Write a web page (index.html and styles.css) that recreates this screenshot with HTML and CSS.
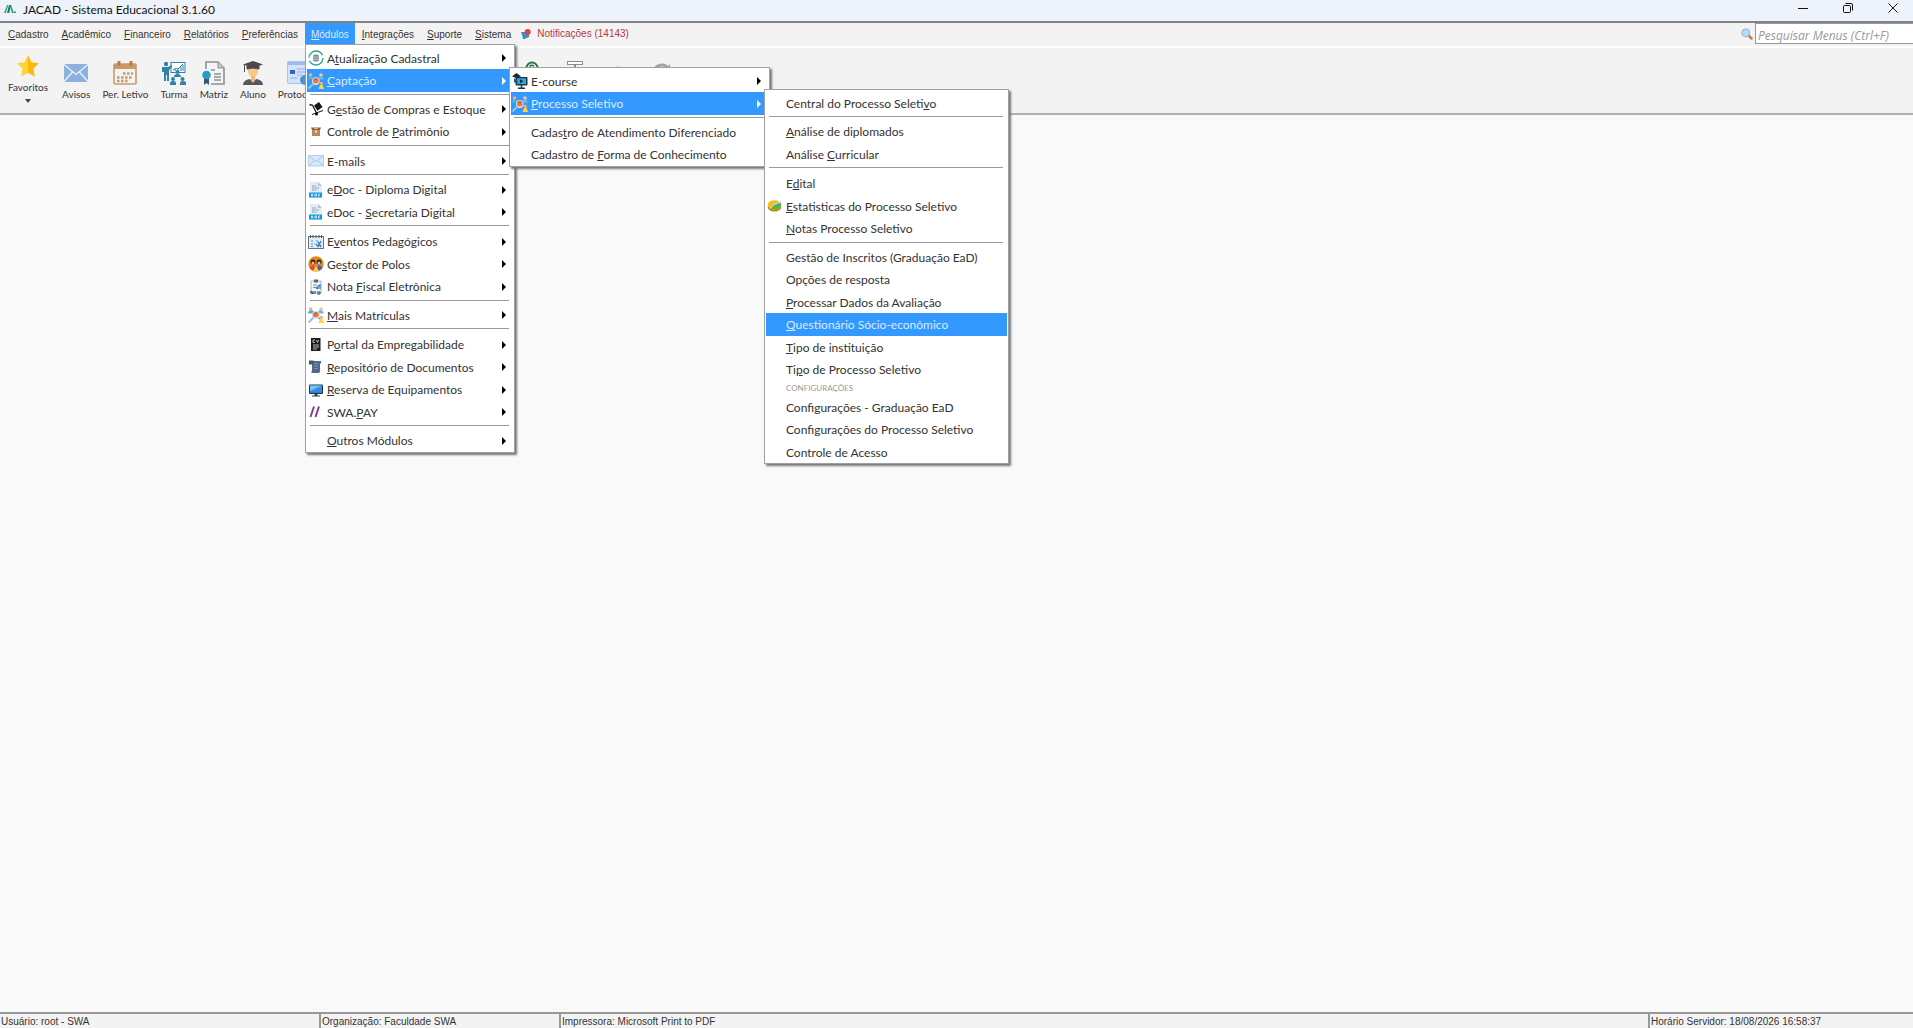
FILE: index.html
```html
<!DOCTYPE html>
<html lang="pt-BR">
<head>
  <meta charset="UTF-8" />
  <meta name="viewport" content="width=device-width, initial-scale=1.0"/>
  <title>JACAD - Sistema Educacional 3.1.60</title>
  <link rel="stylesheet" href="styles.css">
</head>
<body>

  <svg class="sprite" aria-hidden="true">
    <symbol id="people" viewBox="0 0 16 16">
      <path d="M3 3l10 10M13 3L3 13" stroke="#5b8fd0" stroke-width="1.4"/>
      <circle cx="2.6" cy="2" r="1.8" fill="#efb27c"/><path d="M0 6.5q0-3 2.6-3t2.6 3z" fill="#4cb8c4"/>
      <circle cx="13" cy="2" r="1.8" fill="#f3c59a"/><path d="M10.4 6.5q0-3 2.6-3t2.6 3z" fill="#63bfe8"/>
      <circle cx="13.4" cy="10.3" r="1.6" fill="#efb27c"/><path d="M10.6 16l1.4-4h2.6l1.4 4z" fill="#ffd43d"/>
      <path d="M.5 15.5L5 11" stroke="#8ec5ef" stroke-width="2"/>
      <circle cx="7.8" cy="8" r="3.5" fill="#e97742" stroke="#cfe6f7" stroke-width="1"/>
      <path d="M5 9.5q2.8 2 5.6 0l-1 2H6z" fill="#f7e3d3"/><path d="M5.5 6.6q2.3-2.2 4.6 0z" fill="#a8532f"/>
    </symbol>
    <symbol id="doc" viewBox="0 0 16 16">
      <path d="M2 0h8l4 4v12H2z" fill="#e4ebf1"/><path d="M10 0v4h4z" fill="#b4c4d1"/>
      <path d="M4 4h4M4 6h7M4 8h5" stroke="#7a9ed0" stroke-width="1" stroke-dasharray="2 .5"/>
      <rect x="1" y="10.5" width="13" height="5" fill="#139bdc"/>
      <path d="M3.5 12v2h1.2v-2zM7 12h1.5v2H7zM12 12h-1.5v2H12" fill="none" stroke="#fff" stroke-width=".7"/>
    </symbol>
    <symbol id="arrow" viewBox="0 0 4 8"><path d="M0 0l4 4-4 4z" fill="currentColor"/></symbol>
  </svg>

  <header class="titlebar">
    <svg class="logo" viewBox="0 0 12 9"><path d="M0 8L3 0h1.4L1.8 8z" fill="#39a878"/><path d="M3 8l2-8h2.2L5.2 8z" fill="#177a72"/><path d="M7 0l3 8H8L6.2 2zM10 6.5h2V8h-2z" fill="#2fa06f"/></svg>
    <h1>JACAD - Sistema Educacional 3.1.60</h1>
    <div class="window-btns">
      <button aria-label="Minimizar"><svg viewBox="0 0 10 10"><path d="M0 5.5h10"/></svg></button>
      <button aria-label="Restaurar"><svg viewBox="0 0 10 10"><rect x=".5" y="2.5" width="7" height="7" rx="1"/><path d="M2.5.5H8q1.5 0 1.5 1.5v5.5"/></svg></button>
      <button aria-label="Fechar"><svg viewBox="0 0 10 10"><path d="M.5.5l9 9M9.5.5l-9 9"/></svg></button>
    </div>
  </header>

  <nav class="menubar">
    <button><u>C</u>adastro</button>
    <button><u>A</u>cadêmico</button>
    <button><u>F</u>inanceiro</button>
    <button><u>R</u>elatórios</button>
    <button><u>P</u>referências</button>
    <div class="dropdown">
      <button class="active"><u>M</u>ódulos</button>

      <div class="menu menu-modulos">
        <div class="item"><button><svg class="icon" viewBox="0 0 16 16"><circle cx="8" cy="8" r="7" fill="none" stroke="#2fa58c" stroke-width="1.3" stroke-dasharray="19 3"/><rect x="5" y="4.5" width="6" height="7" rx="2" fill="#7c8b94"/><path d="M5 7h6M5 9.2h6" stroke="#dfe6ea" stroke-width=".7"/></svg><span>A<u>t</u>ualização Cadastral</span><svg class="arrow"><use href="#arrow"/></svg></button></div>
        <div class="item">
          <button class="active"><svg class="icon"><use href="#people"/></svg><span><u>C</u>aptação</span><svg class="arrow"><use href="#arrow"/></svg></button>

          <div class="menu menu-captacao">
            <div class="item"><button><svg class="icon" viewBox="0 0 16 16"><rect x="3.5" y="4" width="12" height="8.5" rx="1" fill="#1d3446"/><rect x="5" y="5.3" width="9" height="5.8" fill="#27a9dd"/><path d="M8 6.3l3.4 2L8 10.2z" fill="#12293a"/><path d="M9.5 12v3M6 15.2h7" stroke="#1d3446" stroke-width="1.5"/><path d="M0 3.2L4.5 0 9 3.2 4.5 5.2z" fill="#1b2a38"/><path d="M2 5v4q2.5 2 4 0" fill="#1f5b78"/></svg><span>E-course</span><svg class="arrow"><use href="#arrow"/></svg></button></div>
            <div class="item">
              <button class="active"><svg class="icon"><use href="#people"/></svg><span><u>P</u>rocesso Seletivo</span><svg class="arrow"><use href="#arrow"/></svg></button>

              <div class="menu menu-processo">
                <div class="item"><button><i class="icon"></i><span>Central do Processo Seleti<u>v</u>o</span></button></div>
                <hr>
                <div class="item"><button><i class="icon"></i><span><u>A</u>nálise de diplomados</span></button></div>
                <div class="item"><button><i class="icon"></i><span>Análise <u>C</u>urricular</span></button></div>
                <hr>
                <div class="item"><button><i class="icon"></i><span>E<u>d</u>ital</span></button></div>
                <div class="item"><button><svg class="icon" viewBox="0 0 16 16"><ellipse cx="7.5" cy="9" rx="6.8" ry="4.5" fill="#b98212"/><ellipse cx="7.5" cy="7" rx="6.8" ry="4.8" fill="#f3b92a"/><path d="M3.5 10.5Q7 5 13.5 4.5q2 3.5-2 6-4 2-8 0z" fill="#58b82c"/><path d="M7 9q3-4 6.5-4.5l.5 2z" fill="#3da4d8"/><path d="M3.5 10.5Q7 5 13.5 4.5" fill="none" stroke="#fff6cf" stroke-width=".8"/></svg><span><u>E</u>statisticas do Processo Seletivo</span></button></div>
                <div class="item"><button><i class="icon"></i><span><u>N</u>otas Processo Seletivo</span></button></div>
                <hr>
                <div class="item"><button><i class="icon"></i><span>Gestão de Inscritos (Graduação EaD)</span></button></div>
                <div class="item"><button><i class="icon"></i><span>Opções de resposta</span></button></div>
                <div class="item"><button><i class="icon"></i><span><u>P</u>rocessar Dados da Avaliação</span></button></div>
                <div class="item"><button class="active"><i class="icon"></i><span><u>Q</u>uestionário Sócio-econômico</span></button></div>
                <div class="item"><button><i class="icon"></i><span><u>T</u>ipo de instituição</span></button></div>
                <div class="item"><button><i class="icon"></i><span>Ti<u>p</u>o de Processo Seletivo</span></button></div>
                <h2>CONFIGURAÇÕES</h2>
                <div class="item"><button><i class="icon"></i><span>Configurações - Graduação EaD</span></button></div>
                <div class="item"><button><i class="icon"></i><span>Configurações do Processo Seletivo</span></button></div>
                <div class="item"><button><i class="icon"></i><span>Controle de Acesso</span></button></div>
              </div>
            </div>
            <hr>
            <div class="item"><button><i class="icon"></i><span>Cadas<u>t</u>ro de Atendimento Diferenciado</span></button></div>
            <div class="item"><button><i class="icon"></i><span>Cadastro de <u>F</u>orma de Conhecimento</span></button></div>
          </div>
        </div>
        <hr>
        <div class="item"><button><svg class="icon" viewBox="0 0 16 16"><path d="M6 4.5l5-3.5 3.5 5-5 3.8z" fill="#161616"/><path d="M1.5 3.5l3 .8 4 7.7" fill="none" stroke="#161616" stroke-width="1.3"/><path d="M4 13.5L15 9.5" stroke="#161616" stroke-width="1"/><circle cx="8.5" cy="13" r="1.5"/></svg><span>G<u>e</u>stão de Compras e Estoque</span><svg class="arrow"><use href="#arrow"/></svg></button></div>
        <div class="item"><button><svg class="icon" viewBox="0 0 16 16"><path d="M4 6h8v6H4z" fill="#b98b5c"/><path d="M3 3.5h10L12 6H4z" fill="#8d6038"/><path d="M6 3.5h4V5H6z" fill="#d9b88c"/><path d="M7 6h2v3H7z" fill="#e8cfa9"/></svg><span>Controle de <u>P</u>atrimônio</span><svg class="arrow"><use href="#arrow"/></svg></button></div>
        <hr>
        <div class="item"><button><svg class="icon" viewBox="0 0 16 16"><rect x=".5" y="2.5" width="15" height="10.5" fill="#d9e9fa" stroke="#b4cfec"/><path d="M1 3l7 5.500L15 3M1 13l5-5.500M15 13l-5-5.500" fill="none" stroke="#a4c3e6"/></svg><span>E-mails</span><svg class="arrow"><use href="#arrow"/></svg></button></div>
        <hr>
        <div class="item"><button><svg class="icon"><use href="#doc"/></svg><span>e<u>D</u>oc - Diploma Digital</span><svg class="arrow"><use href="#arrow"/></svg></button></div>
        <div class="item"><button><svg class="icon"><use href="#doc"/></svg><span>eDoc - <u>S</u>ecretaria Digital</span><svg class="arrow"><use href="#arrow"/></svg></button></div>
        <hr>
        <div class="item"><button><svg class="icon" viewBox="0 0 16 16"><rect x=".5" y="2.5" width="15" height="12" fill="#e6edf2" stroke="#66737c"/><path d="M2.5 1v3M5 1v3M8 1v3M11 1v3M13.5 1v3" stroke="#4c565d"/><path d="M3 7h2M8 7h2M3 10h2M6 10h1M3 12.5h2" stroke="#5b8eb8"/><path d="M8 10l2 2.500 3-5.500M10 8l3 5" fill="none" stroke="#2f86c8" stroke-width="1.5"/></svg><span>E<u>v</u>entos Pedagógicos</span><svg class="arrow"><use href="#arrow"/></svg></button></div>
        <div class="item"><button><svg class="icon" viewBox="0 0 16 16"><circle cx="8" cy="8" r="7.7" fill="#e28a1d"/><circle cx="5" cy="6" r="2.5" fill="#3c2115"/><circle cx="11" cy="6" r="2.5" fill="#3c2115"/><circle cx="5" cy="7" r="1.5" fill="#f0bd91"/><circle cx="11" cy="7" r="1.5" fill="#f0bd91"/><path d="M1.5 12q2-3 4-3L8 15q-4 0-6.500-3z" fill="#e94152"/><path d="M14.5 12q-2-3-4-3L8 15q4 0 6.500-3z" fill="#4b57c7"/><path d="M5 15l3-5 3 5q-3 1-6 0z" fill="#ffd332"/></svg><span>Ge<u>s</u>tor de Polos</span><svg class="arrow"><use href="#arrow"/></svg></button></div>
        <div class="item"><button><svg class="icon" viewBox="0 0 16 16"><path d="M3 2h10v12H3z" fill="#f2f5f7" stroke="#a9b4bc"/><rect x="6" y=".5" width="4" height="3" fill="#5b6770"/><path d="M5 6h4M5 8.5h3" stroke="#7d8b95"/><path d="M8 9.500l4-4M10 10V7M12 10V5" stroke="#2b83d2" stroke-width="1.3"/><path d="M3 15v-3l2 3v-3M7 12v3M9 13h3v2H9" fill="none" stroke="#37424a"/></svg><span>Nota <u>F</u>iscal Eletrônica</span><svg class="arrow"><use href="#arrow"/></svg></button></div>
        <hr>
        <div class="item"><button><svg class="icon"><use href="#people"/></svg><span><u>M</u>ais Matrículas</span><svg class="arrow"><use href="#arrow"/></svg></button></div>
        <hr>
        <div class="item"><button><svg class="icon" viewBox="0 0 16 16"><path d="M3 1h9.500v13H3z" fill="#1b1b1b"/><path d="M7 3H5v2.500h2M8.500 3l1 2.500 1-2.500M5 8h6M5 10h6M5 12h4" fill="none" stroke="#ddd" stroke-width=".8"/></svg><span>P<u>o</u>rtal da Empregabilidade</span><svg class="arrow"><use href="#arrow"/></svg></button></div>
        <div class="item"><button><svg class="icon" viewBox="0 0 16 16"><path d="M4 2h9q1 2-1 3v8q-1 1.500-2.500 1H3q1-1 1-3z" fill="#52698a"/><rect x="1" y="1.5" width="4.5" height="4" fill="#3f5675"/><path d="M6 4.500h4M6 7h4M6 9.500h4" stroke="#8ba0bd" stroke-width=".7"/></svg><span><u>R</u>epositório de Documentos</span><svg class="arrow"><use href="#arrow"/></svg></button></div>
        <div class="item"><button><svg class="icon" viewBox="0 0 16 16"><rect x="1" y="2.5" width="14" height="9.5" rx="1" fill="#24384a"/><rect x="2" y="3.5" width="12" height="7.3" fill="#2f8ee0"/><path d="M2 3.500h12L2 9z" fill="#7cc3f5"/><path d="M6.500 12h3v1.500H12v1H4v-1h2.500z" fill="#35424d"/></svg><span><u>R</u>eserva de Equipamentos</span><svg class="arrow"><use href="#arrow"/></svg></button></div>
        <div class="item"><button><svg class="icon" viewBox="0 0 16 16"><path d="M2.500 13L6 2.500M7.500 13L11 2.500" stroke="#7f3f8f" stroke-width="2"/></svg><span>SWA.<u>P</u>AY</span><svg class="arrow"><use href="#arrow"/></svg></button></div>
        <hr>
        <div class="item"><button><i class="icon"></i><span><u>O</u>utros Módulos</span><svg class="arrow"><use href="#arrow"/></svg></button></div>
      </div>
    </div>
    <button><u>I</u>ntegrações</button>
    <button><u>S</u>uporte</button>
    <button><u>S</u>istema</button>
    <a class="notice" href="#"><svg viewBox="0 0 10 10"><path d="M0 3h5l3 3v2q-3 2-6 1z" fill="#3c8bc7"/><path d="M1 9l2 1 2-1" fill="#255f91"/><circle cx="6.7" cy="3" r="3" fill="#e44236"/></svg>Notificações (14143)</a>
    <div class="search">
      <label for="search"><svg viewBox="0 0 12 12"><path d="M7.500 7.500l3 3" stroke="#c77f45" stroke-width="2.5" stroke-linecap="round"/><circle cx="4.8" cy="4.8" r="4" fill="#b6dbf8" stroke="#89b4df"/></svg></label>
      <input id="search" type="text" placeholder="Pesquisar Menus (Ctrl+F)" />
    </div>
  </nav>

  <div class="toolbar">
    <button class="fav"><svg viewBox="0 0 24 24"><path d="M12 1l3.400 7.200 7.600 1-5.600 5.400 1.400 7.800L12 18.700z" fill="#ffb70a"/><path d="M12 1L8.600 8.200l-7.600 1 5.600 5.400-1.400 7.800L12 18.700z" fill="#ffd331"/></svg>Favoritos<i class="caret"></i></button>
    <button><svg viewBox="0 0 24 24"><rect y="3" width="24" height="18" fill="#8cb1df"/><path d="M0 3.500l12 10 12-10M0 20.500l8.500-9.500M24 20.500L15.500 11" fill="none" stroke="#eef4fb" stroke-width="1.3"/></svg>Avisos</button>
    <button><svg viewBox="0 0 24 24"><rect x="1" y="3" width="22" height="20" rx="1" fill="none" stroke="#c99a6b" stroke-width="1.6"/><path d="M1 3h22v5H1z" fill="#c99a6b"/><path d="M6 0v5M18 0v5" stroke="#b37e4c" stroke-width="3"/><path d="M10 12.500h10M4 16.500h16M4 20h12" stroke="#c99a6b" stroke-width="2.5" stroke-dasharray="2.5 1.5"/></svg>Per. Letivo</button>
    <button><svg viewBox="0 0 24 24"><rect x="9" y="1.5" width="14" height="10" fill="#fff" stroke="#3181ab"/><path d="M11 9l3-2 2 1 5-5M13 10V8M16 10V8M19 10V6M21 10V4" fill="none" stroke="#3181ab"/><g fill="#3181ab"><circle cx="4" cy="3" r="2.2"/><path d="M0 6h6l4-2v2L7 9v11H5v-6H4v6H2v-9H0z"/><circle cx="15.5" cy="11" r="2"/><path d="M12 16q0-3 3.500-3t3.500 3zM8 24v-2q0-2 3-2t3 2v2zM18 24v-2q0-2 3-2t3 2v2z"/><circle cx="11" cy="18" r="2"/><circle cx="20.5" cy="18" r="2"/></g></svg>Turma</button>
    <button><svg viewBox="0 0 24 24"><path d="M4 8V1h12l6 6v16H9" fill="#f5f5f5" stroke="#8d8f92" stroke-width="1.6"/><path d="M16 1v6h6" fill="#c7c9cb" stroke="#8d8f92"/><path d="M9 9h4M12 13h7M12 16h7M12 19h7" stroke="#8d8f92" stroke-width="1.5"/><path d="M2 16h5v8l-2.500-2L2 24z" fill="#35576f"/><circle cx="4.5" cy="14" r="4.3" fill="#269bcc"/></svg>Matriz</button>
    <button><svg viewBox="0 0 24 24"><path d="M7 5h10v6q-1 5-5 5t-5-5z" fill="#f6c987"/><path d="M12 0l10 3.500L12 7 2 3.500z" fill="#4b4b4d"/><path d="M6 5h12v3q-6-2-12 0zM3.500 4v7" fill="#4b4b4d" stroke="#4b4b4d"/><path d="M10 15h4v4l-2 3-2-3z" fill="#f0b869"/><path d="M2 24q0-5 7-6l3 4 3-4q7 1 7 6z" fill="#58585a"/></svg>Aluno</button>
    <button><svg viewBox="0 0 24 24"><rect x=".5" y=".5" width="20" height="22" rx="1" fill="#d4e3fb" stroke="#a9c3ee"/><path d="M1 1h19v3H1z" fill="#9dbcf0"/><rect x="3" y="9" width="5" height="4" fill="#2f66cc"/><path d="M10 8h8M10 11h8M10 14h5M3 17h7" stroke="#91ace0"/><circle cx="18" cy="19" r="5" fill="#4793c4"/></svg>Protocolo</button>
    <!-- these four sit mostly behind the open menus -->
    <div class="more">
      <button aria-label="Financeiro"><svg viewBox="0 0 24 24"><circle cx="12" cy="7" r="5.5" fill="none" stroke="#28733f" stroke-width="2"/><path d="M14 5q-4-2-4 1t4 3" fill="none" stroke="#28733f" stroke-width="1.5"/></svg></button>
      <button aria-label="Caixa"><svg viewBox="0 0 24 24"><rect x="4.500" y=".5" width="15" height="3" fill="#fff" stroke="#8c8c8c"/><path d="M12 4v12M8 7h8" stroke="#8c8c8c" stroke-width="2"/></svg></button>
      <button aria-label="Alertas"><svg viewBox="0 0 24 24"><path d="M12 5l6 10H6z" fill="#8c8c8c"/></svg></button>
      <button aria-label="Atualizar"><svg viewBox="0 0 24 24"><path d="M5 10q2-6 8-6 4 0 6 3" fill="none" stroke="#a5a5a5" stroke-width="3"/><path d="M21 3v8h-7z" fill="#a5a5a5"/></svg></button>
    </div>
  </div>

  <main></main>

  <footer class="statusbar">
    <span>Usuário: root - SWA</span>
    <span>Organização: Faculdade SWA</span>
    <span>Impressora: Microsoft Print to PDF</span>
    <span>Horário Servidor: 18/08/2026 16:58:37</span>
  </footer>

</body>
</html>
```
FILE: styles.css
```css
* { margin: 0; padding: 0; box-sizing: border-box; }
body {
  display: flex;
  flex-direction: column;
  min-height: 100vh;
  background-color: #f9f9f9;
  color: #333;
  font-family: "Liberation Sans", Arial, sans-serif;
  font-size: 10px;
}
button {
  border: none;
  background: none;
  color: inherit;
  font: inherit;
  white-space: nowrap;
}
u { text-underline-offset: 1px; }
svg { flex: none; }
.sprite { display: none; }

/* Title bar */
.titlebar {
  display: flex;
  align-items: center;
  height: 21px;
  padding: 0 0 2px 4px;
  background-color: #eef3fb;
}
.titlebar .logo { width: 12px; height: 9px; margin-right: 7px; }
.titlebar h1 {
  font-family: Lato, "Segoe UI", sans-serif;
  font-size: 12px;
  font-weight: normal;
  line-height: 18px;
  color: #111;
}
.window-btns { display: flex; align-self: flex-start; margin-left: auto; }
.window-btns button {
  display: flex;
  align-items: center;
  justify-content: center;
  width: 45px;
  height: 16px;
  padding-left: 4px;
}
.window-btns svg { width: 10px; height: 10px; fill: none; stroke: #111; }

/* Menu bar */
.menubar {
  display: flex;
  align-items: flex-start;
  gap: 1px;
  height: 25px;
  padding-left: 2px;
  border-top: 2px solid #828282;
  background-color: #f3f3f3;
}
.menubar > button, .dropdown > button { height: 21px; padding: 1px 6px 0; }
.dropdown { position: relative; }
.active { background-color: #3399ff; color: #d9ecff; }
.notice {
  display: flex;
  align-items: center;
  gap: 6px;
  height: 21px;
  padding-left: 3px;
  color: #b83741;
  text-decoration: none;
}
.notice svg { width: 10px; height: 10px; }
.search { display: flex; align-items: center; gap: 2px; margin-left: auto; }
.search svg { display: block; width: 12px; height: 12px; }
.search input {
  width: 158px;
  height: 21px;
  padding: 4px 2px 0;
  border: 1px solid #999;
  border-right: none;
  background-color: #fff;
  font: italic 12px "Open Sans", "Segoe UI", sans-serif;
}
.search input::placeholder { color: #999; }

/* Drop-down menus */
.menu {
  position: absolute;
  padding: 2px 1px 0;
  border: 1px solid #a0a0a0;
  background-color: #fff;
  box-shadow: 2px 2px 2px #777;
  color: #333;
  font-family: Lato, "Segoe UI", sans-serif;
  font-size: 12px;
}
.menu-modulos { top: 21px; left: 0; width: 210px; z-index: 1; }
.menu-captacao { top: -2px; left: 202px; width: 261px; }
.menu-processo { top: -3px; left: 253px; width: 245px; }
.item { position: relative; height: 22px; }
.item:nth-of-type(even) { height: 23px; }
.item > button {
  display: flex;
  align-items: center;
  gap: 3px;
  width: 100%;
  height: 100%;
  padding: 0 7px 0 1px;
}
.item .icon { width: 16px; height: 16px; }
.item .arrow { width: 4px; height: 8px; margin-left: auto; color: #000; }
.item .active .arrow { color: #fff; }
.menu hr {
  height: 1px;
  margin: 2px 4px 3px 3px;
  border: none;
  background-color: #999;
}
.menu hr:nth-of-type(even) { margin-bottom: 4px; }
.menu h2 {
  padding-left: 20px;
  font-size: 8px;
  font-weight: normal;
  line-height: 15px;
  color: #999;
}

/* Toolbar */
.toolbar {
  display: flex;
  align-items: flex-start;
  height: 69px;
  padding: 13px 0 0 2px;
  border-top: 2px solid #fff;
  border-bottom: 2px solid #b0b0b0;
  background-color: #f3f3f3;
  font-family: Lato, "Segoe UI", sans-serif;
  font-size: 10px;
  line-height: 14px;
}
.toolbar button {
  display: flex;
  flex-direction: column;
  align-items: center;
  gap: 2px;
  padding: 0 6px;
}
.toolbar svg { width: 24px; height: 24px; }
.toolbar .fav { margin: -7px 2px 0 0; }
.caret {
  margin-top: 3px;
  border: 3px solid transparent;
  border-top: 4px solid #2f4a60;
}
.more { display: flex; gap: 7px; margin-left: 188px; }

main { flex: 1; }

/* Status bar */
.statusbar {
  display: grid;
  grid-template-columns: 319px 240px 1fr 265px;
  height: 16px;
  border-top: 2px solid #999;
  background-color: #f3f3f3;
}
.statusbar span { padding-left: 1px; line-height: 15px; white-space: nowrap; }
.statusbar span + span { border-left: 2px solid #999; }
```
